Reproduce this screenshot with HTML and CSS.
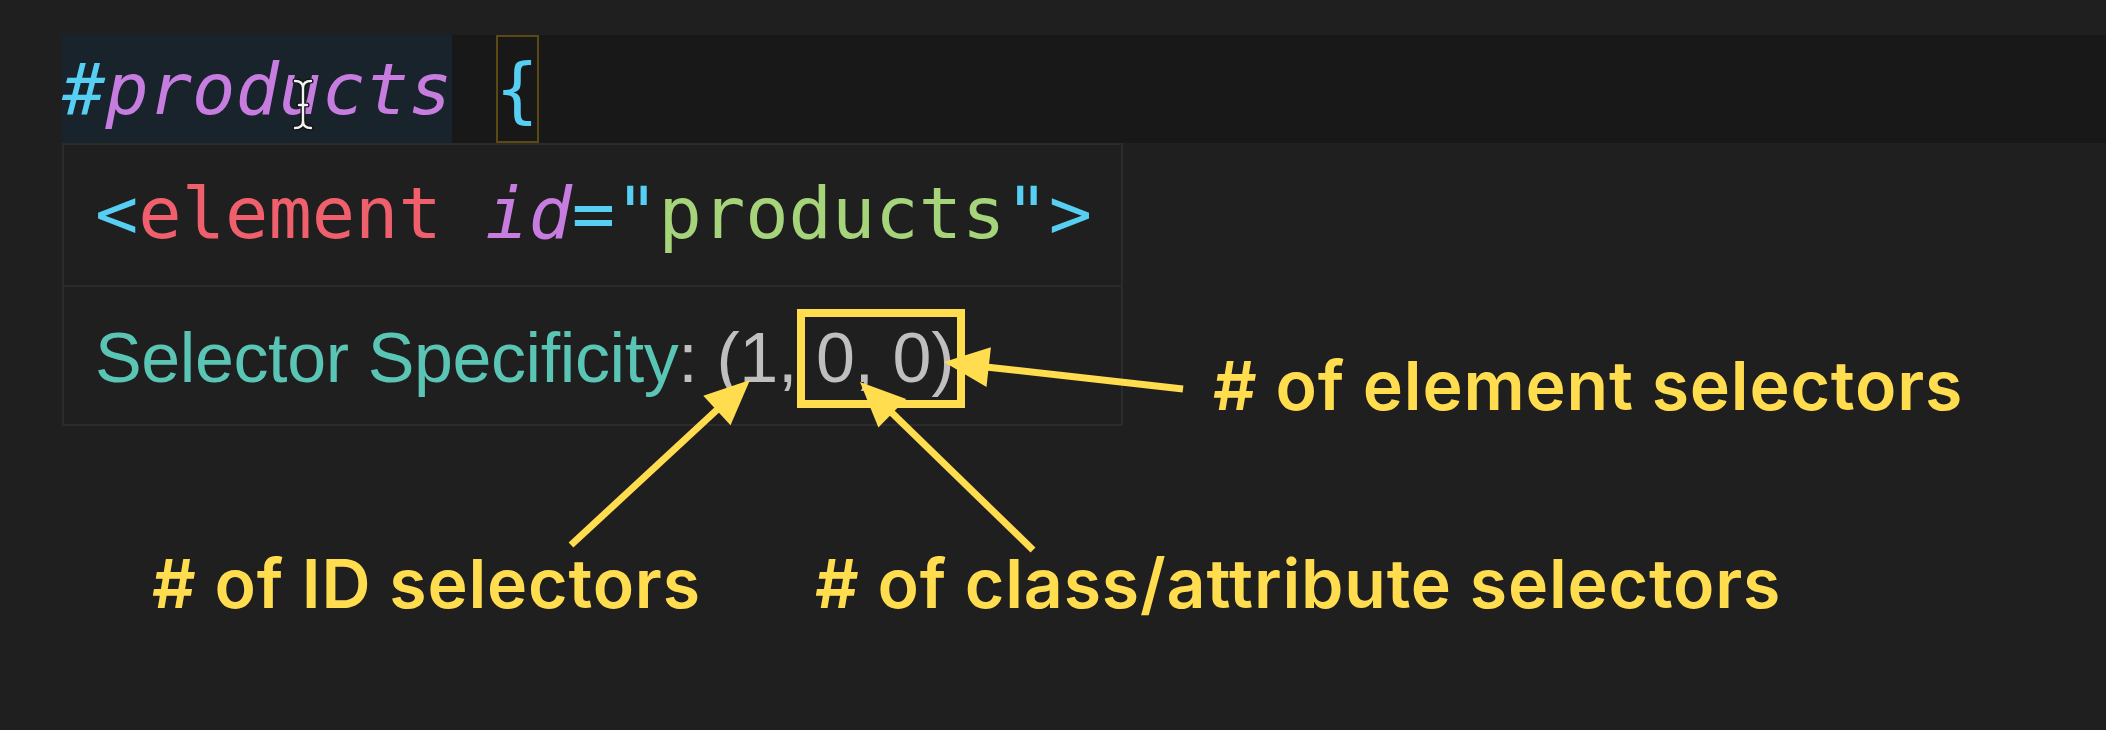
FILE: index.html
```html
<!DOCTYPE html>
<html lang="en">
<head>
<meta charset="utf-8">
<title>Selector Specificity</title>
<link rel="stylesheet" href="styles.css">
</head>
<body>
<div class="page">
  <div class="code-line"><span class="sel"><span class="c-cyan">#</span><span class="c-purple">products</span></span><span class="sp"> </span><span class="brace c-cyan">{</span></div>
  <div class="mid">
    <div class="hover">
      <div class="hover-code"><span class="c-cyan">&lt;</span><span class="c-red">element</span> <span class="c-purple it">id</span><span class="c-cyan">="</span><span class="c-green">products</span><span class="c-cyan">"&gt;</span></div>
      <div class="hover-spec"><span class="c-teal">Selector Specificity</span><span class="c-gray">: (1, 0, 0)</span></div>
    </div>
    <div class="label label-el"># of element selectors</div>
  </div>
  <div class="labels">
    <div class="label"># of ID selectors</div>
    <div class="label"># of class/attribute selectors</div>
  </div>
  <svg class="overlay" width="2106" height="730" viewBox="0 0 2106 730" xmlns="http://www.w3.org/2000/svg">
    <g fill="none" stroke="#ffdd4f" stroke-width="8">
      <rect x="801" y="313" width="160" height="91"/>
    </g>
    <g stroke="#ffdd4f" stroke-width="7" fill="none">
      <line x1="1183" y1="389" x2="986" y2="367"/>
      <line x1="571" y1="545" x2="720" y2="407"/>
      <line x1="1033" y1="550" x2="890" y2="411"/>
    </g>
    <g fill="#ffdd4f">
      <polygon points="944,362 990.9,347.2 986.5,386.9"/>
      <polygon points="750,380 730.5,425.2 703.3,395.8"/>
      <polygon points="860,382 906.2,399 878.4,427.6"/>
    </g>
    <g fill="none" stroke-linecap="round">
      <path d="M295 81 q8 0 8 7 q0 -7 8 -7 M303 88 v33 M295 128 q8 0 8 -7 q0 7 8 7 M299 105 h8" stroke="#111" stroke-width="5"/>
      <path d="M295 81 q8 0 8 7 q0 -7 8 -7 M303 88 v33 M295 128 q8 0 8 -7 q0 7 8 7 M299 105 h8" stroke="#f2f2f2" stroke-width="2.4"/>
    </g>
  </svg>
</div>
</body>
</html>
```
FILE: styles.css
```css
html, body {
  margin: 0;
  padding: 0;
  background: #1f1f1f;
}
.page {
  position: relative;
  width: 2106px;
  height: 730px;
  overflow: hidden;
  background: #1f1f1f;
  padding-top: 35px;
  box-sizing: border-box;
}
.code-line {
  display: flex;
  margin-left: 62px;
  height: 108px;
  line-height: 108px;
  background: #181818;
  font-family: "DejaVu Sans Mono", monospace;
  font-size: 72px;
  white-space: pre;
}
.sel {
  background: #19232c;
  font-style: italic;
}
.brace {
  box-shadow: inset 0 0 0 2px #5a4913;
}
.c-cyan { color: #56cff2; }
.c-purple { color: #c77ddf; }
.c-red { color: #ef5f6c; }
.c-green { color: #a6d47a; }
.c-teal { color: #5ac4b5; }
.c-gray { color: #bfbfbf; }
.it { font-style: italic; }
.mid {
  display: flex;
  align-items: flex-start;
}
.hover {
  margin-left: 62px;
  width: 1061px;
  box-sizing: border-box;
  border: 2px solid #2b2b2b;
  background: #1f1f1f;
}
.hover-code {
  padding-left: 31px;
  padding-bottom: 4px;
  line-height: 136px;
  font-family: "DejaVu Sans Mono", monospace;
  font-size: 72px;
  white-space: pre;
  border-bottom: 2px solid #2a2a2a;
}
.hover-spec {
  padding-left: 31px;
  padding-top: 6px;
  line-height: 131px;
  font-family: "Liberation Sans", Arial, sans-serif;
  font-size: 70px;
  letter-spacing: -0.4px;
  white-space: pre;
}
.label {
  font-family: Inter, "Liberation Sans", sans-serif;
  font-weight: 600;
  font-size: 68px;
  color: #ffdd4f;
  white-space: nowrap;
  letter-spacing: 0.8px;
}
.label-el {
  margin-left: 90px;
  margin-top: 201px;
}
.labels {
  display: grid;
  grid-template-columns: 663px auto;
  padding-left: 152px;
  margin-top: 116px;
}
.overlay {
  position: absolute;
  left: 0;
  top: 0;
  pointer-events: none;
}
```
